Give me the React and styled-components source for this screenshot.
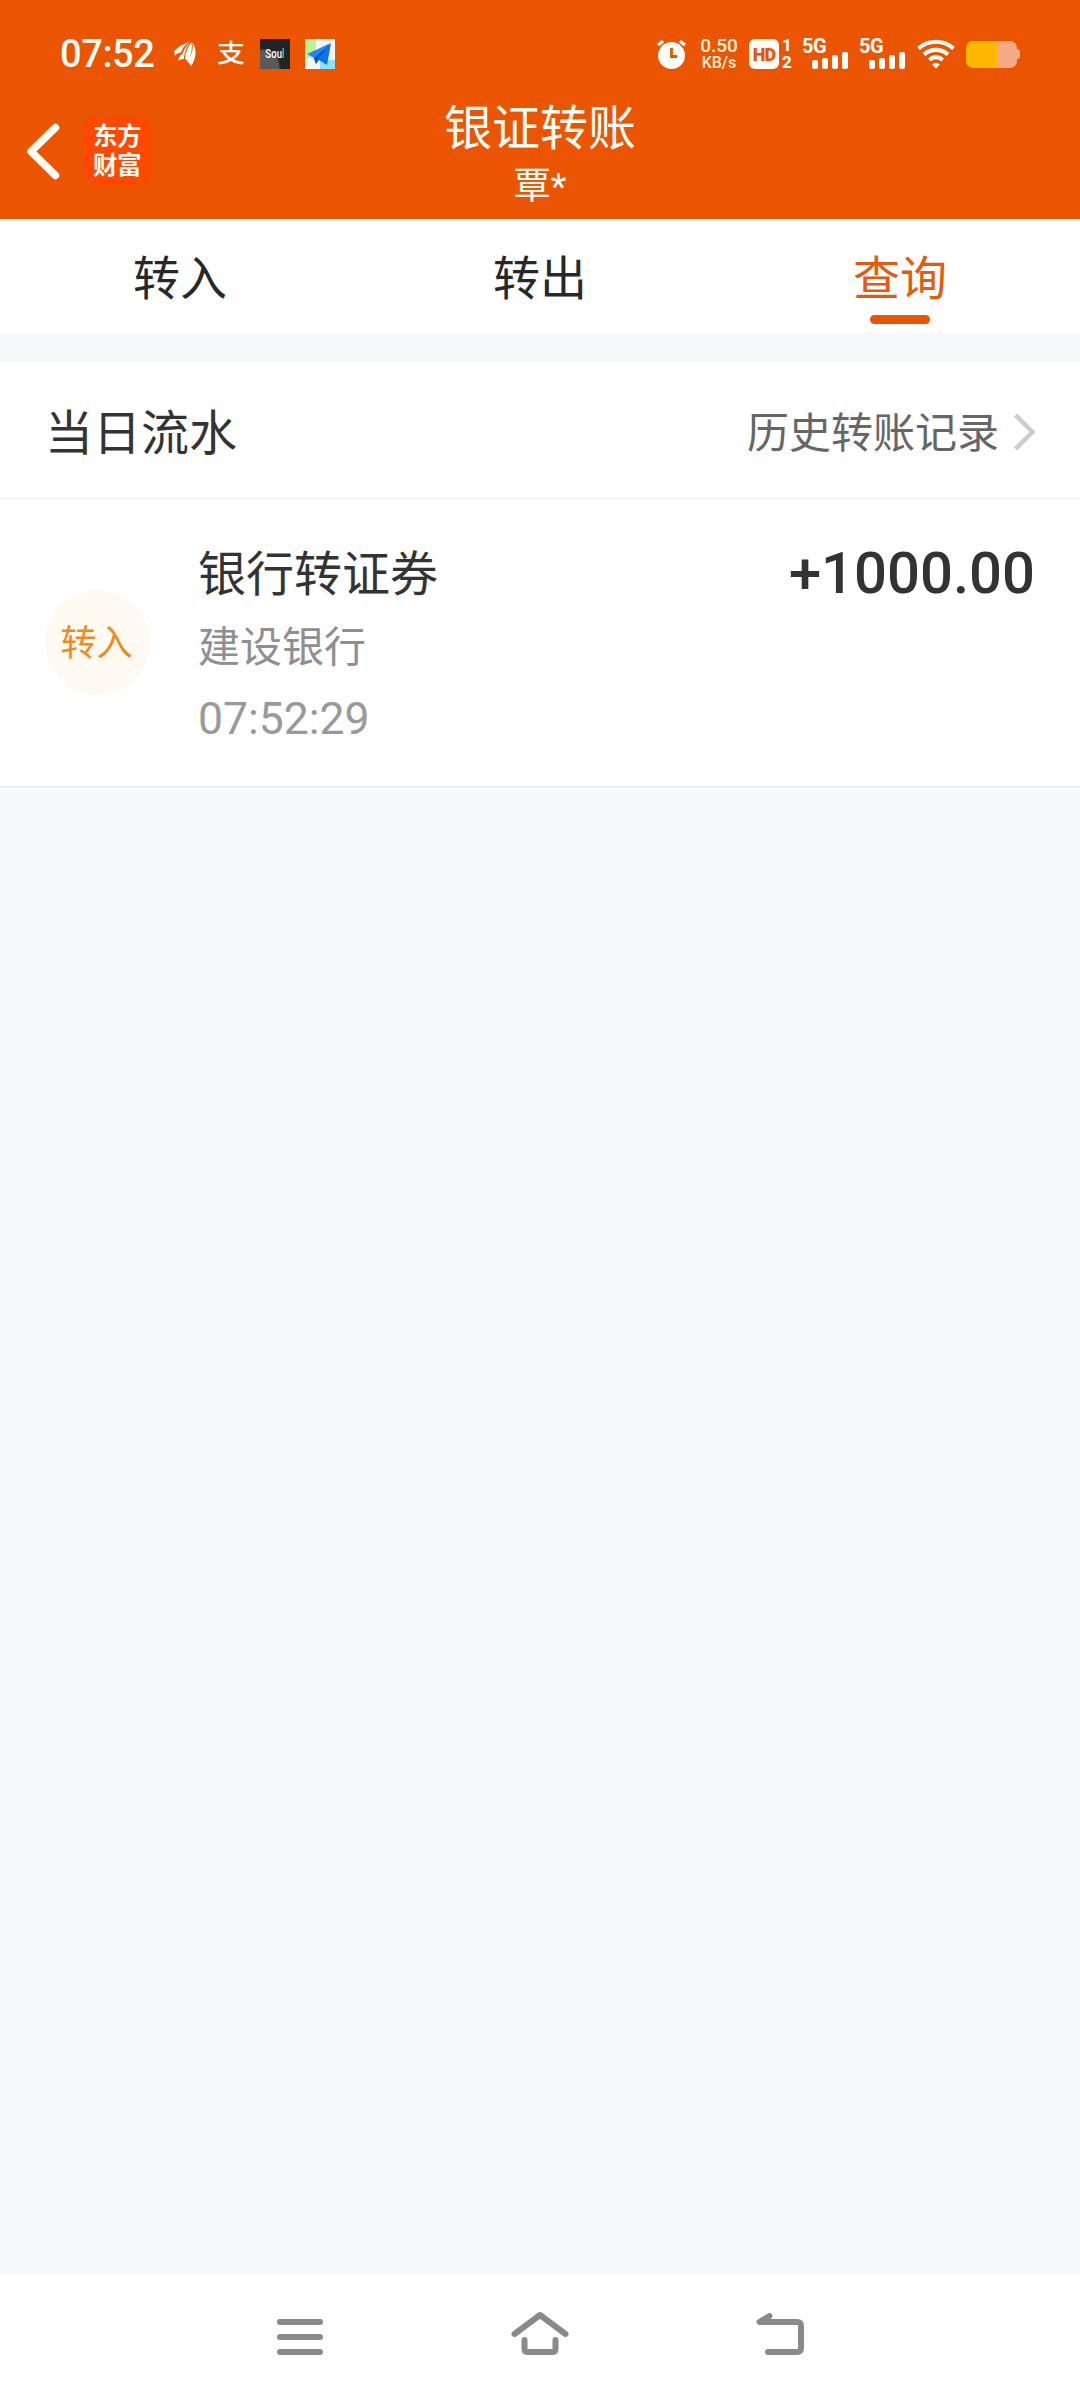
import React from "react";
import styled, { createGlobalStyle } from "styled-components";

const ORANGE = "#eb5502";

const Global = createGlobalStyle`
  *, *::before, *::after { box-sizing: border-box; }
  body {
    margin: 0;
    font-family: Roboto, "Noto Sans CJK SC", sans-serif;
    -webkit-font-smoothing: antialiased;
  }
  svg { display: block; flex: none; }
`;

const Screen = styled.div`
  display: flex;
  flex-direction: column;
  width: 1080px;
  height: 2400px;
  background: #f6f8fa;
  overflow: hidden;
`;

const Header = styled.header`
  height: 219px;
  background: ${ORANGE};
  color: #fffdf6;
`;

const StatusBar = styled.div`
  display: flex;
  justify-content: space-between;
  align-items: center;
  height: 108px;
  padding: 0 60px 0 60px;
`;

const StatusGroup = styled.div`
  display: flex;
  align-items: center;
  height: 30px;
`;

const Clock = styled.span`
  width: 114px;
  font-size: 38px;
  line-height: 32px;
  font-weight: 500;
  letter-spacing: -0.4px;
`;

const PayMark = styled.span`
  width: 28px;
  margin: 0 15px 0 20px;
  font-size: 25px;
  line-height: 32px;
  font-weight: 500;
  transform: scaleX(1.12);
  transform-origin: left center;
`;

const SoulBadge = styled.span`
  display: flex;
  justify-content: center;
  align-items: center;
  width: 30px;
  height: 30px;
  margin-right: 15px;
  background: radial-gradient(circle at 2px 28px, #5a5a5c 0 16px, #232325 19px);
  color: #fff;
  font: 500 13px/30px Roboto, sans-serif;
`;

const SoulText = styled.span`
  transform: scale(0.74, 1.05);
  em { font-style: normal; color: #2fd6cf; }
`;

const NetSpeed = styled.div`
  width: 40px;
  margin-left: 12px;
  text-align: center;
  color: #fff0d8;
`;

const SpeedLine = styled.div`
  font-size: ${(p) => p.$size}px;
  line-height: 17px;
  font-weight: 500;
`;

const HdBox = styled.span`
  width: 30px;
  height: 30px;
  margin-left: 10px;
  border-radius: 6px;
  background: #fffdf6;
  color: ${ORANGE};
  font-size: 18px;
  line-height: 31px;
  font-weight: 900;
  letter-spacing: -1px;
  text-align: center;
`;

const SimNumbers = styled.span`
  display: flex;
  flex-direction: column;
  justify-content: space-between;
  width: 12px;
  height: 30px;
  margin-left: 2px;
  font-size: 17px;
  line-height: 13px;
  font-weight: 800;
  text-align: center;
`;

const Signal = styled.div`
  display: flex;
  flex-direction: column;
  width: 48px;
  height: 30px;
  margin-left: ${(p) => p.$gap}px;
`;

const SignalLabel = styled.span`
  height: 13px;
  font-size: 20px;
  line-height: 15px;
  font-weight: 700;
  letter-spacing: -0.5px;
`;

const Bars = styled.span`
  display: flex;
  justify-content: space-between;
  align-items: flex-end;
  width: 36px;
  height: 17px;
  margin-left: 10px;
`;

const Bar = styled.i`
  width: 6px;
  height: ${(p) => p.$h}px;
  border-radius: 2px;
  background: #fffdf6;
`;

const Wifi = styled.svg`
  margin-left: 10px;
`;

const Battery = styled.span`
  display: flex;
  align-items: center;
  margin-left: 11px;
`;

const BatteryBody = styled.span`
  width: 51px;
  height: 27px;
  border-radius: 7px;
  background: linear-gradient(90deg, #ffb800 0 31px, #f5aa84 31px);
`;

const BatteryTip = styled.span`
  width: 3px;
  height: 10px;
  border-radius: 0 3px 3px 0;
  background: #f5aa84;
`;

const TitleBar = styled.div`
  display: grid;
  grid-template-columns: 240px 1fr 240px;
  height: 111px;
`;

const BackArea = styled.div`
  display: flex;
  align-items: flex-start;
  padding: 9px 0 0 24px;
  gap: 22px;
`;

const BrandLogo = styled.div`
  width: 68px;
  height: 68px;
  padding-top: 5px;
  border-radius: 14px;
  background: #ff4800;
  font-size: 24.5px;
  line-height: 29px;
  font-weight: 700;
  letter-spacing: -0.4px;
  text-align: center;
`;

const Titles = styled.div`
  display: flex;
  flex-direction: column;
  align-items: center;
`;

const Title = styled.h1`
  margin: 0;
  height: 57px;
  font-size: 48px;
  line-height: 42px;
  font-weight: 400;
`;

const Subtitle = styled.div`
  font-size: 37px;
  line-height: 44px;
`;

const Tabs = styled.nav`
  display: grid;
  grid-template-columns: repeat(3, 1fr);
  height: 114px;
  background: #fff;
`;

const Tab = styled.div`
  display: flex;
  flex-direction: column;
  align-items: center;
  padding-top: 30px;
  color: ${(p) => (p.$active ? "#e35a10" : "#282828")};
  font-size: 47px;
  line-height: 60px;

  &::after {
    content: "";
    width: 60px;
    height: 9px;
    margin-top: 6px;
    border-radius: 5px;
    background: ${(p) => (p.$active ? ORANGE : "transparent")};
  }
`;

const Section = styled.section`
  margin-top: 30px;
  background: #fff;
  border-bottom: 1px solid #e8e8ea;
`;

const SectionHead = styled.div`
  display: flex;
  justify-content: space-between;
  align-items: center;
  height: 136px;
  padding: 6px 44px 0 45px;
  border-bottom: 1px solid #ececee;
`;

const SectionTitle = styled.h2`
  margin: 0;
  color: #333;
  font-size: 48px;
  line-height: 60px;
  font-weight: 400;
`;

const HistoryLink = styled.div`
  display: flex;
  align-items: center;
  gap: 15px;
  color: #666;
  font-size: 42px;
  line-height: 60px;

  svg { margin-top: -4px; }
`;

const Record = styled.div`
  display: flex;
  align-items: center;
  height: 287px;
  padding: 0 45px 0 45px;
`;

const Kind = styled.div`
  width: 105px;
  height: 105px;
  padding-right: 2px;
  border-radius: 50%;
  background: #fffaf1;
  color: #f08a1d;
  font-size: 36px;
  line-height: 109px;
  text-align: center;
`;

const Details = styled.div`
  flex: 1;
  align-self: flex-start;
  margin-left: 48px;
  padding-top: 39px;
`;

const DetailLine = styled.div`
  height: ${(p) => p.$height}px;
  color: ${(p) => p.$color};
  font-size: ${(p) => p.$size}px;
  line-height: 73px;
`;

const Amount = styled.div`
  align-self: flex-start;
  padding-top: 38px;
  color: #333;
  font-size: 58px;
  line-height: 73px;
  font-weight: 500;
`;

const NavBar = styled.footer`
  display: flex;
  justify-content: center;
  align-items: center;
  gap: 180px;
  height: 126px;
  margin-top: auto;
  background: #fff;
`;

const NavIcon = ({ children }) => (
  <svg width="60" height="60" viewBox="0 0 60 60" fill="none" stroke="#8a8a8a"
    strokeWidth="6" strokeLinecap="round" strokeLinejoin="round">{children}</svg>
);

const CellSignal = ({ gap }) => (
  <Signal $gap={gap}>
    <SignalLabel>5G</SignalLabel>
    <Bars>{[9, 11, 14, 17].map((h) => <Bar key={h} $h={h} />)}</Bars>
  </Signal>
);

export default function App() {
  return (
    <>
      <Global />
      <Screen>
        <Header>
          <StatusBar>
            <StatusGroup>
              <Clock>07:52</Clock>
              <svg width="23" height="26" viewBox="0 0 23 26" fill="#fffdf6">
                <path d="M0 10C4 6 9 3 15 1 10 5 8 8 7 11.500 4 11.500 2 13 1 15Z" />
                <path d="M16.500 1C12 5 9.500 9 8.500 13 6 14 4.500 16.500 4.500 19.500 7 18 8.500 18 10 18 10 12 12.500 6 16.500 1Z" />
                <path d="M17.500 1C13.500 7 11 12 11 18.500L14.500 20C17.500 13 18.500 7 17.500 1Z" />
                <path d="M18.500 1.500C23 8 22.500 17 17 25.500 16.500 23 15 21.500 13 21 17.500 15 19.500 8 18.500 1.500Z" />
              </svg>
              <PayMark>支</PayMark>
              <SoulBadge><SoulText>Sou<em>l</em></SoulText></SoulBadge>
              <svg width="30" height="30" viewBox="0 0 30 30">
                <rect width="30" height="30" fill="#f3f6f4" />
                <path d="M0 0H11V17L0 20Z" fill="#baf394" />
                <path d="M15 21H30V30H15Z" fill="#8fe0fb" />
                <path d="M26 4L2 15 9 19Z" fill="#1688ff" />
                <path d="M26 4L9 19 11 25 14 21 22 26Z" fill="#0875ee" />
                <path d="M24 6L9 19 11 25 13 20Z" fill="#0552ba" />
              </svg>
            </StatusGroup>
            <StatusGroup>
              <svg width="31" height="30" viewBox="0 0 31 30">
                <circle cx="15.500" cy="16.500" r="13.500" fill="#fffdf6" />
                <path d="M2 6L7 2M29 6L24 2" stroke="#fffdf6" strokeWidth="3.400" />
                <path d="M15.500 9V17.500H21" fill="none" stroke={ORANGE} strokeWidth="2.800" />
              </svg>
              <NetSpeed>
                <SpeedLine $size={19}>0.50</SpeedLine>
                <SpeedLine $size={16}>KB/s</SpeedLine>
              </NetSpeed>
              <HdBox>HD</HdBox>
              <SimNumbers><span>1</span><span>2</span></SimNumbers>
              <CellSignal gap={9} />
              <CellSignal gap={9} />
              <Wifi width="38" height="30" viewBox="0 0 38 30" fill="none" stroke="#fffdf6" strokeWidth="4.200">
                <path d="M1.500 9.500C11.500 0.500 26.500 0.500 36.500 9.500" />
                <path d="M7 15.500C14 9.200 24 9.200 31 15.500" />
                <path d="M12.300 21C16.500 17.200 21.500 17.200 25.700 21" />
                <path d="M15 25.500Q19 22 23 25.500L19 29.500Z" fill="#fffdf6" stroke="none" />
              </Wifi>
              <Battery><BatteryBody /><BatteryTip /></Battery>
            </StatusGroup>
          </StatusBar>
          <TitleBar>
            <BackArea>
              <svg width="37" height="68" viewBox="0 0 37 68" fill="none" stroke="#fffdf6"
                strokeWidth="7.500" strokeLinecap="round" strokeLinejoin="round">
                <path d="M31.500 10.500L7 34.500 31.500 58.500" />
              </svg>
              <BrandLogo>东方<br />财富</BrandLogo>
            </BackArea>
            <Titles>
              <Title>银证转账</Title>
              <Subtitle>覃*</Subtitle>
            </Titles>
          </TitleBar>
        </Header>
        <Tabs>
          <Tab>转入</Tab>
          <Tab>转出</Tab>
          <Tab $active>查询</Tab>
        </Tabs>
        <Section>
          <SectionHead>
            <SectionTitle>当日流水</SectionTitle>
            <HistoryLink>
              历史转账记录
              <svg width="22" height="38" viewBox="0 0 22 38" fill="none" stroke="#ccc" strokeWidth="4.500">
                <path d="M1.500 2L18.500 19 1.500 36" />
              </svg>
            </HistoryLink>
          </SectionHead>
          <Record>
            <Kind>转入</Kind>
            <Details>
              <DetailLine $size={48} $height={73} $color="#333">银行转证券</DetailLine>
              <DetailLine $size={42} $height={72} $color="#8e8e93">建设银行</DetailLine>
              <DetailLine $size={44.5} $height={73} $color="#999">07:52:29</DetailLine>
            </Details>
            <Amount>+1000.00</Amount>
          </Record>
        </Section>
        <NavBar>
          <NavIcon><path d="M10 15H50M10 30H50M10 45H50" /></NavIcon>
          <NavIcon>
            <path d="M4.500 27L30 8 55.500 27M14.500 33V42Q14.500 45 18 45H42Q45.500 45 45.500 42V33" />
          </NavIcon>
          <NavIcon>
            <path d="M19.500 9L9.500 15H47Q51 15 51 19V41Q51 45 47 45H18" />
          </NavIcon>
        </NavBar>
      </Screen>
    </>
  );
}
